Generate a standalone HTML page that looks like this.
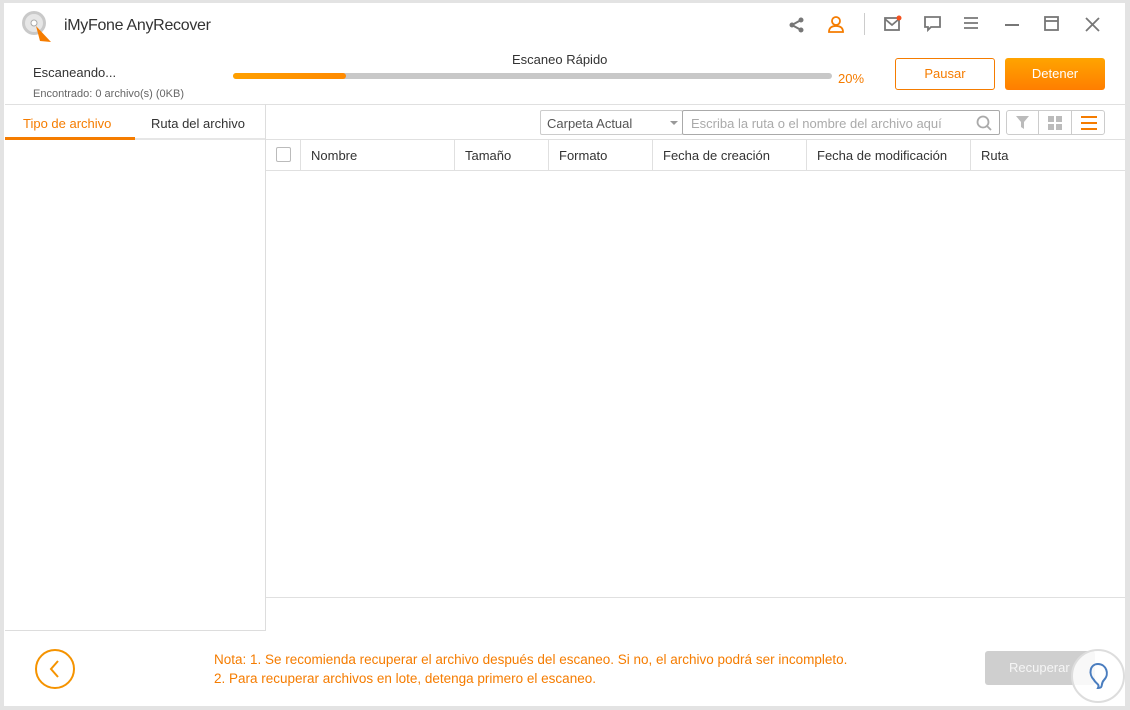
<!DOCTYPE html>
<html><head><meta charset="utf-8"><style>
*{margin:0;padding:0;box-sizing:border-box}
body{width:1130px;height:710px;background:#e3e3e3;font-family:"Liberation Sans",sans-serif;position:relative;overflow:hidden;color:#333}
.win{position:absolute;left:4px;top:3px;width:1121px;height:703px;background:#fff}
.a{position:absolute}
.t{font-size:13px;white-space:nowrap}
</style></head><body>
<div class="win"></div>
<svg class="a" style="left:20px;top:9px" width="34" height="34" viewBox="0 0 34 34">
<circle cx="14" cy="14" r="12" fill="#c9c9c9"/><circle cx="14" cy="14" r="9" fill="#e6e6e6"/><circle cx="14" cy="14" r="3" fill="#fff" stroke="#aaa"/>
<path d="M16 17 L31 33 L20 32 Z" fill="#f57c00"/></svg>
<div class="a t" style="left:64px;top:17px;font-size:16px;color:#333;letter-spacing:-0.3px">iMyFone AnyRecover</div>
<svg class="a" style="left:788px;top:16px" width="18" height="18" viewBox="0 0 18 18" fill="none" stroke="#777" stroke-width="2"><circle cx="13" cy="4" r="1.5" fill="#777"/><circle cx="4" cy="9" r="1.5" fill="#777"/><circle cx="13" cy="14" r="1.5" fill="#777"/><path d="M13 4 L4 9 L13 14"/></svg>
<svg class="a" style="left:826px;top:14px" width="20" height="20" viewBox="0 0 20 20" fill="none" stroke="#f57c00" stroke-width="1.8"><circle cx="10" cy="7" r="4"/><path d="M3 18 Q3 12 10 12 Q17 12 17 18 Z"/></svg>
<div class="a" style="left:864px;top:13px;width:1px;height:22px;background:#ccc"></div>
<svg class="a" style="left:883px;top:15px" width="20" height="18" viewBox="0 0 20 18" fill="none" stroke="#777" stroke-width="1.8"><rect x="2" y="3" width="14" height="12"/><path d="M2 4 L9 10 L16 4"/><circle cx="16" cy="3" r="2.5" fill="#f4511e" stroke="none"/></svg>
<svg class="a" style="left:923px;top:15px" width="20" height="18" viewBox="0 0 20 18" fill="none" stroke="#777" stroke-width="1.8"><path d="M2 2 H17 V12 H8 L5 15 V12 H2 Z"/></svg>
<svg class="a" style="left:963px;top:16px" width="16" height="14" viewBox="0 0 16 14" stroke="#777" stroke-width="1.8"><path d="M1 2H15M1 7H15M1 12H15"/></svg>
<div class="a" style="left:1005px;top:24px;width:14px;height:2px;background:#777"></div>
<svg class="a" style="left:1044px;top:16px" width="16" height="16" viewBox="0 0 16 16" fill="none" stroke="#777" stroke-width="1.8"><rect x="1" y="1" width="13" height="13"/><path d="M1 5H14"/></svg>
<svg class="a" style="left:1085px;top:17px" width="15" height="15" viewBox="0 0 15 15" stroke="#777" stroke-width="1.8"><path d="M1 1L14 14M14 1L1 14"/></svg>
<div class="a t" style="left:33px;top:65px;color:#333">Escaneando...</div>
<div class="a t" style="left:33px;top:88px;font-size:11px;color:#666">Encontrado: 0 archivo(s) (0KB)</div>
<div class="a t" style="left:512px;top:52px;color:#333">Escaneo Rápido</div>
<div class="a" style="left:233px;top:73px;width:599px;height:6px;border-radius:3px;background:#c8c8c8"></div>
<div class="a" style="left:233px;top:73px;width:113px;height:6px;border-radius:3px;background:linear-gradient(90deg,#ffa000,#ff8a00)"></div>
<div class="a t" style="left:838px;top:71px;color:#f57c00">20%</div>
<div class="a t" style="left:895px;top:58px;width:100px;height:32px;border:1px solid #f57c00;border-radius:3px;color:#f57c00;text-align:center;line-height:30px">Pausar</div>
<div class="a t" style="left:1005px;top:58px;width:100px;height:32px;border-radius:3px;background:linear-gradient(#ffa400,#ff7e00);color:#fff;text-align:center;line-height:32px">Detener</div>
<div class="a" style="left:5px;top:104px;width:1120px;height:1px;background:#e0e0e0"></div>
<div class="a" style="left:265px;top:104px;width:1px;height:527px;background:#ddd"></div>
<div class="a" style="left:5px;top:630px;width:261px;height:1px;background:#ddd"></div>
<div class="a t" style="left:23px;top:116px;color:#f57c00">Tipo de archivo</div>
<div class="a t" style="left:151px;top:116px;color:#333">Ruta del archivo</div>
<div class="a" style="left:5px;top:137px;width:130px;height:3px;background:#f57c00"></div>
<div class="a" style="left:135px;top:138px;width:130px;height:2px;background:#e6e6e6"></div>
<div class="a t" style="left:540px;top:110px;width:143px;height:25px;border:1px solid #ccc;border-radius:2px;padding:5px 6px;color:#555">Carpeta Actual</div>
<div class="a" style="left:670px;top:121px;border:4px solid transparent;border-top:4px solid #999;border-bottom:0"></div>
<div class="a t" style="left:682px;top:110px;width:318px;height:25px;border:1px solid #aaa;border-radius:2px;padding:5px 8px;color:#aaa">Escriba la ruta o el nombre del archivo aquí</div>
<svg class="a" style="left:976px;top:115px" width="16" height="16" viewBox="0 0 16 16" fill="none" stroke="#aaa" stroke-width="1.8"><circle cx="7" cy="7" r="5.5"/><path d="M11 11L15 15"/></svg>
<div class="a" style="left:1006px;top:110px;width:99px;height:25px;border:1px solid #ccc;border-radius:3px"></div>
<div class="a" style="left:1038px;top:110px;width:1px;height:25px;background:#ccc"></div>
<div class="a" style="left:1071px;top:110px;width:1px;height:25px;background:#ccc"></div>
<svg class="a" style="left:1015px;top:115px" width="15" height="15" viewBox="0 0 15 15"><path d="M1 1H14L9 7V14L6 12V7Z" fill="#bbb"/></svg>
<svg class="a" style="left:1048px;top:116px" width="14" height="14"><rect x="0" y="0" width="6" height="6" fill="#bbb"/><rect x="8" y="0" width="6" height="6" fill="#bbb"/><rect x="0" y="8" width="6" height="6" fill="#bbb"/><rect x="8" y="8" width="6" height="6" fill="#bbb"/></svg>
<svg class="a" style="left:1081px;top:116px" width="16" height="14" stroke="#f57c00" stroke-width="2"><path d="M0 1H16M0 7H16M0 13H16"/></svg>
<div class="a" style="left:266px;top:139px;width:859px;height:1px;background:#e0e0e0"></div>
<div class="a" style="left:266px;top:170px;width:859px;height:1px;background:#e0e0e0"></div>
<div class="a" style="left:276px;top:147px;width:15px;height:15px;border:1px solid #bbb;border-radius:2px"></div>
<div class="a" style="left:300px;top:140px;width:1px;height:30px;background:#e0e0e0"></div>
<div class="a" style="left:454px;top:140px;width:1px;height:30px;background:#e0e0e0"></div>
<div class="a" style="left:548px;top:140px;width:1px;height:30px;background:#e0e0e0"></div>
<div class="a" style="left:652px;top:140px;width:1px;height:30px;background:#e0e0e0"></div>
<div class="a" style="left:806px;top:140px;width:1px;height:30px;background:#e0e0e0"></div>
<div class="a" style="left:970px;top:140px;width:1px;height:30px;background:#e0e0e0"></div>
<div class="a t" style="left:311px;top:148px">Nombre</div>
<div class="a t" style="left:465px;top:148px">Tamaño</div>
<div class="a t" style="left:559px;top:148px">Formato</div>
<div class="a t" style="left:663px;top:148px">Fecha de creación</div>
<div class="a t" style="left:817px;top:148px">Fecha de modificación</div>
<div class="a t" style="left:981px;top:148px">Ruta</div>
<div class="a" style="left:266px;top:597px;width:859px;height:1px;background:#e0e0e0"></div>
<svg class="a" style="left:34px;top:648px" width="42" height="42" viewBox="0 0 42 42" fill="none" stroke="#f59300" stroke-width="2"><circle cx="21" cy="21" r="19"/><path d="M24 13L17 21L24 29"/></svg>
<div class="a t" style="left:214px;top:652px;color:#f57c00;font-size:13.5px">Nota: 1. Se recomienda recuperar el archivo después del escaneo. Si no, el archivo podrá ser incompleto.</div>
<div class="a t" style="left:214px;top:671px;color:#f57c00;font-size:13.5px">2. Para recuperar archivos en lote, detenga primero el escaneo.</div>
<div class="a t" style="left:985px;top:651px;width:110px;height:34px;border-radius:3px;background:#cfcfcf;color:#f5f5f5;line-height:34px;padding-left:24px">Recuperar</div>
<svg class="a" style="left:1070px;top:648px" width="56" height="56" viewBox="0 0 56 56"><circle cx="28" cy="28" r="26" fill="rgba(255,255,255,.85)" stroke="#ddd" stroke-width="2"/><path d="M28 16C20 16 18 26 24 32C26 36 30 36 28 40C34 40 30 36 34 32C40 26 36 16 28 16Z" fill="none" stroke="#4a7dbf" stroke-width="2"/></svg>
</body></html>
